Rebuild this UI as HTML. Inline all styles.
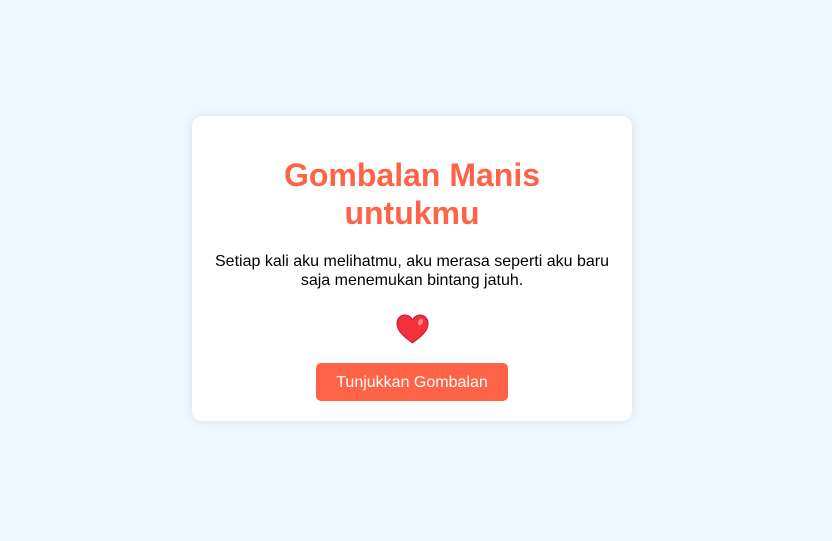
<!DOCTYPE html>
<html><head><meta charset="utf-8"><style>
html,body{margin:0;height:100%;}
body{background:#f0f8ff;font-family:"Liberation Sans",Arial,sans-serif;}
.card{position:absolute;left:192px;top:116px;width:400px;height:265px;padding:20px;background:#fff;border-radius:10px;box-shadow:0 0 10px rgba(0,0,0,0.1);text-align:center;}
h1{position:absolute;left:0;right:0;top:40px;margin:0;font-size:32px;line-height:38px;color:#ff6347;font-weight:bold;}
p{position:absolute;left:0;right:0;top:136px;margin:0;font-size:16px;line-height:19px;color:#000;}
.heart{position:absolute;left:204px;top:198px;}
.btn{position:absolute;left:124px;top:247px;width:192px;height:38px;background:#ff6347;color:#fff;border-radius:5px;font-size:16px;line-height:40px;}
</style></head><body>
<div class="card">
<h1>Gombalan Manis<br>untukmu</h1>
<p>Setiap kali aku melihatmu, aku merasa seperti aku baru<br>saja menemukan bintang jatuh.</p>
<svg class="heart" width="33" height="30" viewBox="0 0 33 30"><path d="M16.5 29 C10 24 1 18 1 9.5 C1 4.5 4.5 1 9 1 C12.5 1 15 3 16.5 6 C18 3 20.5 1 24 1 C28.5 1 32 4.5 32 9.5 C32 18 23 24 16.5 29Z" fill="#f4313b" stroke="#c8143a" stroke-width="1"/><ellipse cx="24.5" cy="8" rx="2.3" ry="3.6" transform="rotate(25 24.5 8)" fill="#ff8a8a"/></svg>
<div class="btn">Tunjukkan Gombalan</div>
</div>
</body></html>
